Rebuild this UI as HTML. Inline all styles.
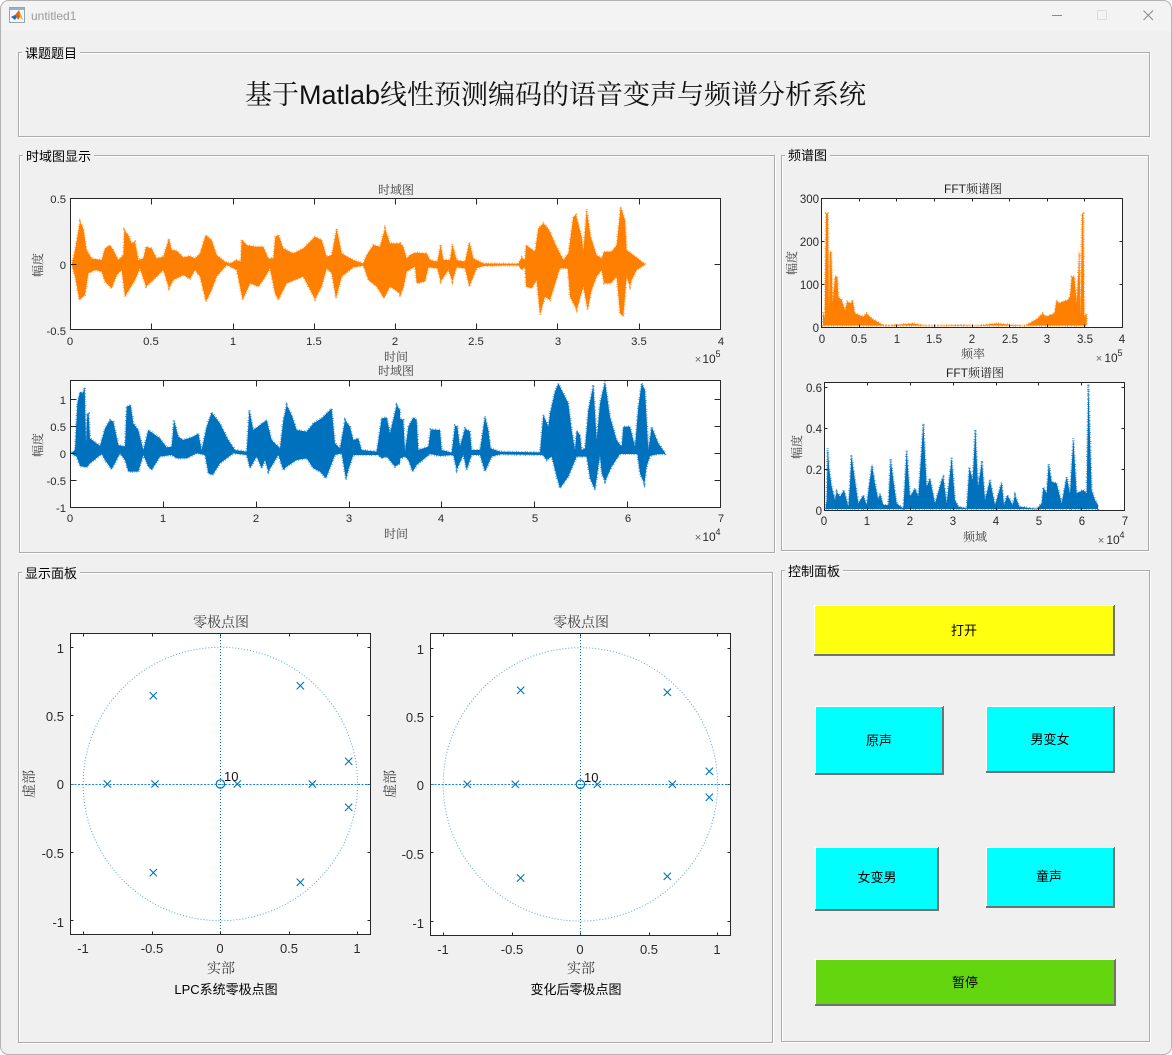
<!DOCTYPE html>
<html lang="zh"><head><meta charset="utf-8"><title>untitled1</title>
<style>
html,body{margin:0;padding:0;background:#fff;width:1172px;height:1055px;overflow:hidden}
svg{display:block}
text{font-family:"Liberation Sans","Noto Serif CJK SC",serif}
.t{font-size:11.3px;fill:#2a2a2a;text-anchor:middle}
.r{font-size:11.3px;fill:#2a2a2a;text-anchor:end}
.f{font-size:11.5px;fill:#2a2a2a;text-anchor:middle}
.fr{font-size:11.5px;fill:#2a2a2a;text-anchor:end}
.p{font-size:13px;fill:#2a2a2a;text-anchor:middle}
.pr{font-size:13px;fill:#2a2a2a;text-anchor:end}
.l{font-size:12px;fill:#404040;text-anchor:middle}
.b{font-size:14px;fill:#404040;text-anchor:middle}
.u{font-size:13px;fill:#000;font-family:"Liberation Sans","WenQuanYi Zen Hei","Noto Sans CJK SC",sans-serif}
.c{font-size:13px;fill:#000;text-anchor:middle;font-family:"Liberation Sans","WenQuanYi Zen Hei","Noto Sans CJK SC",sans-serif}
.ax{fill:#fff;stroke:#262626;stroke-width:1;shape-rendering:crispEdges}
.tk{fill:none;stroke:#262626;stroke-width:1;shape-rendering:crispEdges}
.pn{fill:none;stroke:#fff;stroke-width:1;shape-rendering:crispEdges}
.pg{fill:none;stroke:#ababab;stroke-width:1;shape-rendering:crispEdges}
.lb{fill:#f0f0f0}
.dot{fill:none;stroke:#1a86d0;stroke-width:1;stroke-dasharray:1 2;stroke-opacity:.75}
.dh{fill:none;stroke:#1a86d0;stroke-width:1;stroke-dasharray:2 1.500;shape-rendering:crispEdges}
.dv{fill:none;stroke:#0072bd;stroke-width:1;stroke-dasharray:1 2;shape-rendering:crispEdges}
.x{fill:none;stroke:#0072bd;stroke-width:1}
.or{fill:#ff8000;stroke:#ff8000;stroke-width:7;stroke-dasharray:2 3 1 5 3 4 2 6;stroke-opacity:.75}
.bl{fill:#0072bd;stroke:#0072bd;stroke-width:7;stroke-dasharray:2 3 1 5 3 4 2 6;stroke-opacity:.75}
</style></head><body>
<svg xmlns="http://www.w3.org/2000/svg" width="1172" height="1055" viewBox="0 0 1172 1055">
<!-- window -->
<rect x="0.5" y="0.5" width="1171" height="1054" rx="8" fill="#f0f0f0" stroke="#b4b4b4"/>
<path d="M1.5 31V8.5a7 7 0 0 1 7-7H1163.500a7 7 0 0 1 7 7V31Z" fill="#f3f3f3"/>
<!-- icon -->
<rect x="9.500" y="7.500" width="15" height="15" fill="#f7f8fa" stroke="#9aa4ae"/>
<rect x="10" y="8" width="14" height="2" fill="#8fb2d6"/>
<path d="M11 17l4-2 4-5 2 5 2 5-3-3-2 3-2-4-1 0z" fill="#d9641a"/>
<path d="M19 10l2 5 2 5-3-3z" fill="#f2a93b"/>
<path d="M11 17l4-2 2 2-2 3z" fill="#2a6db0"/>
<text x="31" y="20" style="font-size:12px;fill:#9a9a9a">untitled1</text>
<path d="M1052 15.500h10" stroke="#8a8a8a" fill="none"/>
<rect x="1097.500" y="10.500" width="9" height="9" rx="1" fill="none" stroke="#dcdcdc"/>
<path d="M1143.500 10.500l9.500 9.500M1153 10.500l-9.500 9.500" stroke="#8a8a8a" fill="none"/>

<!-- panel 1 -->
<rect x="19.500" y="53.500" width="1131" height="84" class="pn"/>
<rect x="18.500" y="52.500" width="1131" height="84" class="pg"/>
<rect x="22" y="46" width="58" height="13" class="lb"/>
<text x="25" y="58" class="u">课题题目</text>
<text x="245" y="104" style="font-size:27px;fill:#111">基于Matlab线性预测编码的语音变声与频谱分析系统</text>

<!-- panel 2 -->
<rect x="20.500" y="156.500" width="755" height="397" class="pn"/>
<rect x="19.500" y="155.500" width="755" height="397" class="pg"/>
<rect x="23" y="149" width="71" height="13" class="lb"/>
<text x="26" y="161" class="u">时域图显示</text>

<!-- panel 3 -->
<rect x="782.500" y="156.500" width="367" height="395" class="pn"/>
<rect x="781.500" y="155.500" width="367" height="395" class="pg"/>
<rect x="785" y="149" width="45" height="13" class="lb"/>
<text x="788" y="160" class="u">频谱图</text>

<!-- panel 4 -->
<rect x="19.500" y="573.500" width="754" height="470" class="pn"/>
<rect x="18.500" y="572.500" width="754" height="470" class="pg"/>
<rect x="22" y="566" width="58" height="13" class="lb"/>
<text x="25" y="578" class="u">显示面板</text>

<!-- panel 5 -->
<rect x="782.500" y="571.500" width="368" height="471" class="pn"/>
<rect x="781.500" y="570.500" width="368" height="471" class="pg"/>
<rect x="785" y="564" width="58" height="13" class="lb"/>
<text x="788" y="576" class="u">控制面板</text>

<!-- Plot 1 -->
<text x="396" y="194" class="l">时域图</text>
<rect x="70.500" y="198.500" width="650" height="131" class="ax"/>
<g transform="translate(20 180) scale(.33333)">
<path class="or" d="M155 254L165 210 172 170 180 125 190 145 200 210 215 235 245 240 255 205 270 195 280 210 295 240 310 225 313 150 325 165 335 190 345 185 355 240 370 235 378 200 395 205 410 235 430 230 447 175 455 210 470 212 490 232 510 228 525 235 540 220 557 165 575 180 590 225 615 245 630 250 650 240 662 245 665 178 680 195 705 200 730 200 745 235 760 235 766 170 776 165 790 205 820 220 850 205 885 170 905 180 920 230 935 225 950 145 965 220 1000 240 1030 250 1040 225 1060 195 1080 200 1095 145 1110 190 1140 190 L1140 340 1110 320 1092 355 1070 320 1045 300 1030 257 1000 262 965 290 948 355 935 280 920 265 905 320 885 358 850 290 800 310 775 360 765 340 750 265 730 300 715 320 690 310 668 360 650 270 620 255 590 290 575 330 558 365 540 290 525 270 510 297 490 285 460 300 447 325 430 270 400 300 378 320 360 265 345 300 330 325 315 350 305 270 290 285 275 325 255 305 245 275 225 270 205 280 195 345 178 360 165 290Z"/>
</g>
<g transform="translate(400 180) scale(.33333)">
<path class="or" d="M-2 190L0 190 10 200 20 235 30 225 45 218 80 220 90 240 112 245 122 193 130 240 150 240 157 193 170 240 195 245 208 186 220 235 250 250 355 251 365 232 375 240 378 195 405 215 415 145 430 130 440 140 450 155 465 190 490 240 505 220 520 110 528 105 545 170 550 215 560 88 572 170 590 225 605 235 612 215 635 215 650 195 662 80 675 120 680 210 700 225 735 252 735 254 710 270 695 300 690 320 680 290 670 410 660 400 650 290 632 310 612 310 605 270 590 290 575 330 563 390 550 320 530 390 510 350 503 265 480 265 450 360 435 350 420 405 410 300 395 325 378 320 375 260 365 270 355 256 250 258 230 265 208 320 195 265 170 262 157 305 145 270 122 305 112 265 85 262 75 305 50 310 45 260 20 275 10 325 0 345 -2 340Z"/>
</g>
<path class="tk" d="M151.500 198.500v6M233.500 198.500v6M314.500 198.500v6M395.500 198.500v6M476.500 198.500v6M557.500 198.500v6M639.500 198.500v6M151.500 329.500v-6M233.500 329.500v-6M314.500 329.500v-6M395.500 329.500v-6M476.500 329.500v-6M557.500 329.500v-6M639.500 329.500v-6M70.500 264.500h6M720.500 264.500h-6"/>
<text class="t" x="70" y="345">0</text><text class="t" x="151" y="345">0.5</text><text class="t" x="233" y="345">1</text><text class="t" x="314" y="345">1.5</text><text class="t" x="395" y="345">2</text><text class="t" x="476" y="345">2.5</text><text class="t" x="558" y="345">3</text><text class="t" x="639" y="345">3.5</text><text class="t" x="721" y="345">4</text>
<text class="r" x="66" y="203">0.5</text><text class="r" x="66" y="269">0</text><text class="r" x="66" y="335">-0.5</text>
<text class="l" x="396" y="361">时间</text>
<text class="l" transform="translate(42 265) rotate(-90)">幅度</text>
<text class="t" x="698" y="363" style="fill:#666">×</text><text class="t" x="709" y="363" style="font-size:12px">10</text><text class="t" x="718" y="357" style="font-size:9px">5</text>

<!-- Plot 2 -->
<text x="396" y="375" class="l">时域图</text>
<rect x="70.500" y="380.500" width="650" height="127" class="ax"/>
<g transform="translate(20 360) scale(.33333)">
<path class="bl" d="M155 278L165 270 172 130 180 95 188 100 194 82 198 250 202 160 206 160 210 235 240 258 255 205 270 180 280 185 295 255 315 260 320 140 332 135 340 190 355 210 370 270 385 210 420 235 440 262 455 260 462 180 475 230 490 240 520 230 535 220 545 270 560 200 575 157 600 190 625 240 645 270 680 275 688 150 700 210 740 180 755 240 780 265 790 180 800 135 815 165 830 210 860 215 880 190 905 175 935 145 945 250 960 265 975 180 990 200 1000 240 1015 235 1025 270 1070 275 1085 175 1100 172 1110 220 1130 135 1140 150 1140 310 1125 320 1100 290 1085 295 1075 285 1000 285 985 330 978 358 965 280 945 285 918 355 900 335 880 325 860 295 830 300 800 320 790 330 775 285 745 335 735 300 725 325 710 290 690 325 680 285 640 280 620 295 600 310 578 345 565 340 555 285 530 280 500 295 470 295 455 285 420 290 395 330 385 320 370 285 355 335 325 335 315 300 300 280 275 328 255 300 245 282 210 310 200 322 180 318 170 290 155 282Z"/>
</g>
<g transform="translate(400 360) scale(.33333)">
<path class="bl" d="M-2 175L0 175 10 180 15 275 25 200 40 172 50 180 55 270 85 260 92 208 120 210 125 270 155 278 165 197 172 200 180 260 195 205 210 215 215 270 240 270 255 170 265 210 272 265 300 275 420 277 430 165 445 200 450 160 465 95 475 70 490 100 505 130 515 210 525 270 530 212 540 225 545 270 555 265 565 150 580 75 590 240 600 130 615 65 630 170 650 240 665 260 670 200 690 200 705 260 715 140 725 70 735 90 745 270 755 200 775 250 795 278 795 282 770 283 750 288 740 320 733 372 720 340 712 282 660 282 635 320 615 365 605 340 600 285 585 390 570 355 560 290 530 290 505 350 480 385 470 350 455 290 440 300 428 285 300 283 275 290 255 335 240 285 215 285 200 330 190 285 170 330 160 285 120 288 90 282 50 315 38 335 25 300 15 290 0 295 -2 295Z"/>
</g>
<path class="tk" d="M163.500 380.500v6M256.500 380.500v6M349.500 380.500v6M441.500 380.500v6M534.500 380.500v6M627.500 380.500v6M163.500 507.500v-6M256.500 507.500v-6M349.500 507.500v-6M441.500 507.500v-6M534.500 507.500v-6M627.500 507.500v-6M70.500 399.500h6M70.500 426.500h6M70.500 453.500h6M70.500 480.500h6M720.500 399.500h-6M720.500 426.500h-6M720.500 453.500h-6M720.500 480.500h-6"/>
<text class="t" x="70" y="522">0</text><text class="t" x="163" y="522">1</text><text class="t" x="256" y="522">2</text><text class="t" x="349" y="522">3</text><text class="t" x="441" y="522">4</text><text class="t" x="535" y="522">5</text><text class="t" x="628" y="522">6</text><text class="t" x="721" y="522">7</text>
<text class="r" x="66" y="404">1</text><text class="r" x="66" y="431">0.5</text><text class="r" x="66" y="458">0</text><text class="r" x="66" y="485">-0.5</text><text class="r" x="66" y="512">-1</text>
<text class="l" x="396" y="538">时间</text>
<text class="l" transform="translate(42 445) rotate(-90)">幅度</text>
<text class="t" x="698" y="541" style="fill:#666">×</text><text class="t" x="709" y="541" style="font-size:12px">10</text><text class="t" x="718" y="535" style="font-size:9px">4</text>

<!-- FFT 1 -->
<text class="l" x="973" y="193" style="fill:#222">FFT频谱图</text>
<rect x="821.500" y="198.500" width="301" height="129" class="ax"/>
<g transform="translate(780 170) scale(.33333)">
<path class="or" d="M129 467L129 425 130 430 134 445 138 130 144 130 147 440 150 245 154 245 158 400 165 320 172 320 175 380 185 390 195 420 202 395 212 400 218 390 225 430 250 440 260 430 275 445 300 460 315 467 400 460 430 466 460 467 540 465 590 467 650 460 700 465 735 467 748 460 773 445 788 430 798 440 823 430 830 390 836 400 848 395 863 390 870 380 875 320 883 320 890 400 898 245 902 440 906 130 910 130 913 440 920 430 920 467Z"/>
</g>
<path class="tk" d="M859.500 198.500v3M896.500 198.500v3M934.500 198.500v3M972.500 198.500v3M1009.500 198.500v3M1047.500 198.500v3M1084.500 198.500v3M859.500 327.500v-3M896.500 327.500v-3M934.500 327.500v-3M972.500 327.500v-3M1009.500 327.500v-3M1047.500 327.500v-3M1084.500 327.500v-3M821.500 241.500h3M821.500 284.500h3M1122.500 241.500h-3M1122.500 284.500h-3"/>
<text class="f" x="822" y="343">0</text><text class="f" x="859" y="343">0.5</text><text class="f" x="897" y="343">1</text><text class="f" x="934" y="343">1.5</text><text class="f" x="972" y="343">2</text><text class="f" x="1010" y="343">2.5</text><text class="f" x="1047" y="343">3</text><text class="f" x="1085" y="343">3.5</text><text class="f" x="1122" y="343">4</text>
<text class="fr" x="819" y="203">300</text><text class="fr" x="819" y="246">200</text><text class="fr" x="819" y="289">100</text><text class="fr" x="819" y="332">0</text>
<text class="l" x="973" y="358">频率</text>
<text class="l" transform="translate(796 263) rotate(-90)">幅度</text>
<text class="t" x="1099" y="362" style="fill:#666">×</text><text class="t" x="1111" y="362" style="font-size:12px">10</text><text class="t" x="1120" y="356" style="font-size:9px">5</text>

<!-- FFT 2 -->
<text class="l" x="975" y="377" style="fill:#222">FFT频谱图</text>
<rect x="824.500" y="382.500" width="300" height="128" class="ax"/>
<g transform="translate(780 360) scale(.33333)">
<path class="bl" d="M137 447L137 440 140 420 143 265 148 330 155 380 165 420 170 395 180 410 192 390 205 440 210 370 214 285 222 340 235 430 250 405 260 435 268 370 276 315 285 370 295 420 300 400 310 435 325 435 332 297 340 360 350 430 370 445 380 270 390 410 405 385 415 410 430 190 440 380 450 355 465 430 485 360 490 352 500 430 515 293 525 420 535 440 560 445 568 322 578 360 586 208 594 380 606 303 615 420 630 360 645 435 665 367 672 435 682 405 698 435 705 405 718 440 770 447 785 430 790 382 800 400 806 310 815 365 830 370 845 430 860 350 870 400 880 235 890 400 910 390 920 400 925 72 935 390 945 420 954 435 954 447Z"/>
</g>
<path class="tk" d="M867.500 382.500v3M910.500 382.500v3M953.500 382.500v3M996.500 382.500v3M1038.500 382.500v3M1081.500 382.500v3M867.500 510.500v-3M910.500 510.500v-3M953.500 510.500v-3M996.500 510.500v-3M1038.500 510.500v-3M1081.500 510.500v-3M824.500 387.500h3M824.500 428.500h3M824.500 469.500h3M1124.500 387.500h-3M1124.500 428.500h-3M1124.500 469.500h-3"/>
<text class="f" x="824" y="525">0</text><text class="f" x="867" y="525">1</text><text class="f" x="910" y="525">2</text><text class="f" x="953" y="525">3</text><text class="f" x="996" y="525">4</text><text class="f" x="1039" y="525">5</text><text class="f" x="1082" y="525">6</text><text class="f" x="1125" y="525">7</text>
<text class="fr" x="822" y="392">0.6</text><text class="fr" x="822" y="433">0.4</text><text class="fr" x="822" y="474">0.2</text><text class="fr" x="822" y="515">0</text>
<text class="l" x="975" y="541">频域</text>
<text class="l" transform="translate(801 447) rotate(-90)">幅度</text>
<text class="t" x="1101" y="544" style="fill:#666">×</text><text class="t" x="1113" y="544" style="font-size:12px">10</text><text class="t" x="1122" y="538" style="font-size:9px">4</text>

<!-- Pole-zero 1 -->
<text class="b" x="221" y="627">零极点图</text>
<rect x="70.500" y="633.500" width="300" height="301" class="ax"/>
<path class="tk" d="M83.500 633.500v3M152.500 633.500v3M220.500 633.500v3M289.500 633.500v3M357.500 633.500v3M83.500 934.500v-3M152.500 934.500v-3M220.500 934.500v-3M289.500 934.500v-3M357.500 934.500v-3M70.500 647.500h3M70.500 715.500h3M70.500 784.500h3M70.500 852.500h3M70.500 920.500h3M370.500 647.500h-3M370.500 715.500h-3M370.500 784.500h-3M370.500 852.500h-3M370.500 920.500h-3"/>
<ellipse class="dot" cx="220.400" cy="784" rx="137.200" ry="136.700"/>
<path class="dh" d="M71 784.500H370"/><path class="dv" d="M220.500 634V934"/>
<g transform="translate(10 600) scale(.33333)"><path class="x" style="stroke-width:3.300" d="M419 276l22 22m0-22l-22 22M860 246l22 22m0-22l-22 22M1005 473l22 22m0-22l-22 22M1005 611l22 22m0-22l-22 22M860 836l22 22m0-22l-22 22M419 807l22 22m0-22l-22 22M281 541l22 22m0-22l-22 22M424 541l22 22m0-22l-22 22M671 541l22 22m0-22l-22 22M896 541l22 22m0-22l-22 22"/></g>
<circle class="x" cx="220.400" cy="784" r="4.200" style="stroke-width:1.200"/>
<text x="224" y="781" style="font-size:13px;fill:#111">10</text>
<text class="p" x="83" y="953">-1</text><text class="p" x="152" y="953">-0.5</text><text class="p" x="220" y="953">0</text><text class="p" x="289" y="953">0.5</text><text class="p" x="357" y="953">1</text>
<text class="pr" x="64" y="653">1</text><text class="pr" x="64" y="721">0.5</text><text class="pr" x="64" y="789">0</text><text class="pr" x="64" y="858">-0.5</text><text class="pr" x="64" y="927">-1</text>
<text class="b" x="221" y="973">实部</text>
<text class="b" transform="translate(34 784) rotate(-90)">虚部</text>
<text class="c" x="226" y="994">LPC系统零极点图</text>

<!-- Pole-zero 2 -->
<text class="b" x="581" y="627">零极点图</text>
<rect x="430.500" y="633.500" width="300" height="302" class="ax"/>
<path class="tk" d="M443.500 633.500v3M512.500 633.500v3M580.500 633.500v3M649.500 633.500v3M717.500 633.500v3M443.500 935.500v-3M512.500 935.500v-3M580.500 935.500v-3M649.500 935.500v-3M717.500 935.500v-3M430.500 648.500h3M430.500 716.500h3M430.500 784.500h3M430.500 852.500h3M430.500 921.500h3M730.500 648.500h-3M730.500 716.500h-3M730.500 784.500h-3M730.500 852.500h-3M730.500 921.500h-3"/>
<ellipse class="dot" cx="580.400" cy="784.400" rx="137.200" ry="136.700"/>
<path class="dh" d="M431 784.500H730"/><path class="dv" d="M580.500 634V935"/>
<g transform="translate(380 600) scale(.33333)"><path class="x" style="stroke-width:3.300" d="M411 260l22 22m0-22l-22 22M851 266l22 22m0-22l-22 22M977 503l22 22m0-22l-22 22M977 581l22 22m0-22l-22 22M851 818l22 22m0-22l-22 22M411 823l22 22m0-22l-22 22M251 542l22 22m0-22l-22 22M395 542l22 22m0-22l-22 22M641 542l22 22m0-22l-22 22M866 542l22 22m0-22l-22 22"/></g>
<circle class="x" cx="580.400" cy="784.300" r="4.200" style="stroke-width:1.200"/>
<text x="584" y="782" style="font-size:13px;fill:#111">10</text>
<text class="p" x="443" y="954">-1</text><text class="p" x="512" y="954">-0.5</text><text class="p" x="580" y="954">0</text><text class="p" x="649" y="954">0.5</text><text class="p" x="717" y="954">1</text>
<text class="pr" x="424" y="654">1</text><text class="pr" x="424" y="722">0.5</text><text class="pr" x="424" y="790">0</text><text class="pr" x="424" y="859">-0.5</text><text class="pr" x="424" y="928">-1</text>
<text class="b" x="581" y="973">实部</text>
<text class="b" transform="translate(395 784) rotate(-90)">虚部</text>
<text class="c" x="576" y="994">变化后零极点图</text>

<!-- Buttons -->
<g shape-rendering="crispEdges">
<path d="M814 605h301v51h-301z" fill="#727272"/><path d="M814 605h300v1h-300zM814 606h1v48h-1z" fill="#fff"/><path d="M815 606h298v48h-298z" fill="#ffff10"/>
<path d="M815 706h129v69h-129z" fill="#727272"/><path d="M815 706h128v1h-128zM815 707h1v66h-1z" fill="#fff"/><path d="M816 707h126v66h-126z" fill="#00ffff"/>
<path d="M986 706h129v67h-129z" fill="#727272"/><path d="M986 706h128v1h-128zM986 707h1v64h-1z" fill="#fff"/><path d="M987 707h126v64h-126z" fill="#00ffff"/>
<path d="M815 847h124v64h-124z" fill="#727272"/><path d="M815 847h123v1h-123zM815 848h1v61h-1z" fill="#fff"/><path d="M816 848h121v61h-121z" fill="#00ffff"/>
<path d="M986 847h129v61h-129z" fill="#727272"/><path d="M986 847h128v1h-128zM986 848h1v58h-1z" fill="#fff"/><path d="M987 848h126v58h-126z" fill="#00ffff"/>
<path d="M815 959h301v47h-301z" fill="#727272"/><path d="M815 959h300v1h-300zM815 960h1v44h-1z" fill="#fff"/><path d="M816 960h298v44h-298z" fill="#64d610"/>
</g>
<text class="c" x="964" y="635">打开</text>
<text class="c" x="879" y="745">原声</text>
<text class="c" x="1050" y="744">男变女</text>
<text class="c" x="877" y="882">女变男</text>
<text class="c" x="1049" y="881">童声</text>
<text class="c" x="965" y="987">暂停</text>
</svg>
</body></html>
